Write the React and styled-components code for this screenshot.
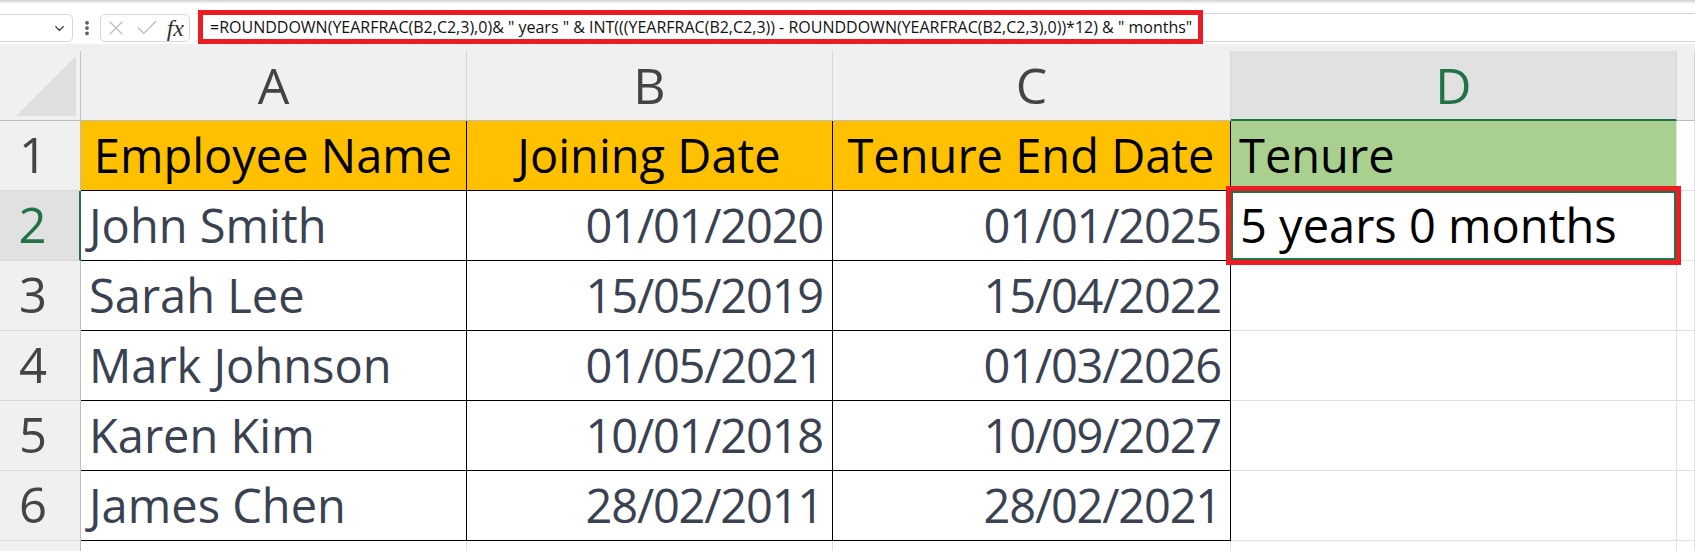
import React from "react";
import styled, { createGlobalStyle } from "styled-components";
import { ChevronDown, EllipsisVertical, X, Check } from "lucide-react";

const GlobalStyle = createGlobalStyle`
  html, body {
    margin: 0;
    padding: 0;
    background: #f0f0f0;
    font-family: "Open Sans", "Noto Sans", sans-serif;
  }
  * { box-sizing: border-box; }
`;

const FORMULA =
  '=ROUNDDOWN(YEARFRAC(B2,C2,3),0)& " years " & INT(((YEARFRAC(B2,C2,3)) - ROUNDDOWN(YEARFRAC(B2,C2,3),0))*12) & " months"';

const columns = [
  { key: "A", width: 386 },
  { key: "B", width: 366 },
  { key: "C", width: 398 },
  { key: "D", width: 446, active: true },
];

const rows = [
  ["John Smith", "01/01/2020", "01/01/2025"],
  ["Sarah Lee", "15/05/2019", "15/04/2022"],
  ["Mark Johnson", "01/05/2021", "01/03/2026"],
  ["Karen Kim", "10/01/2018", "10/09/2027"],
  ["James Chen", "28/02/2011", "28/02/2021"],
];

const App = () => {
  return (
    <>
      <GlobalStyle />
      <Page>
        <FormulaBar>
          <NameBox>
            <ChevronDown size={15} strokeWidth={2.2} color="#333" />
          </NameBox>
          <Dots>
            <EllipsisVertical size={18} strokeWidth={3} color="#555" />
          </Dots>
          <ButtonGroup>
            <X size={24} strokeWidth={1.1} color="#b8b8b8" />
            <Check size={26} strokeWidth={1.1} color="#b8b8b8" />
            <Fx>fx</Fx>
          </ButtonGroup>
          <FormulaInput>
            <Highlight>{FORMULA}</Highlight>
          </FormulaInput>
        </FormulaBar>

        <Sheet>
          <Corner>
            <Triangle />
          </Corner>
          {columns.map((c) => (
            <ColHead key={c.key} $active={c.active}>
              {c.key}
            </ColHead>
          ))}
          <ColHead />

          <RowHead>1</RowHead>
          <Cell $bg="#ffc000" $boxed $head $align="center">Employee Name</Cell>
          <Cell $bg="#ffc000" $boxed $head $align="center">Joining Date</Cell>
          <Cell $bg="#ffc000" $boxed $head $align="center">Tenure End Date</Cell>
          <Cell $bg="#a9d08e" $head>Tenure</Cell>
          <Cell />

          {rows.map((r, i) => (
            <React.Fragment key={r[0]}>
              <RowHead $active={i === 0}>{i + 2}</RowHead>
              <Cell $boxed>{r[0]}</Cell>
              <Cell $boxed $num $align="flex-end">{r[1]}</Cell>
              <Cell $boxed $num $align="flex-end">{r[2]}</Cell>
              {i === 0 ? (
                <Cell $head $selected>5 years 0 months</Cell>
              ) : (
                <Cell />
              )}
              <Cell />
            </React.Fragment>
          ))}

          <RowHead />
          <Cell />
          <Cell />
          <Cell />
          <Cell />
          <Cell />
        </Sheet>
      </Page>
    </>
  );
};

const Page = styled.div`
  width: 100%;
  height: 551px;
  overflow: hidden;
`;

const FormulaBar = styled.div`
  display: flex;
  align-items: flex-start;
  height: 44px;
  padding-top: 14px;
  background: linear-gradient(#d2d2d2 0px, #e8e8e8 2px, #ffffff 4px);
`;

const NameBox = styled.div`
  display: flex;
  align-items: center;
  justify-content: flex-end;
  margin-left: -20px;
  width: 93px;
  height: 28px;
  padding-right: 5px;
  background: #fff;
  border: 1px solid #d6d6d6;
  border-radius: 5px;
`;

const Dots = styled.div`
  display: flex;
  align-items: center;
  justify-content: center;
  width: 27px;
  height: 28px;
`;

const ButtonGroup = styled.div`
  display: flex;
  align-items: center;
  justify-content: space-between;
  width: 90px;
  height: 28px;
  padding: 0 4px 0 3px;
  background: #fff;
  border: 1px solid #d6d6d6;
  border-radius: 5px;
`;

const Fx = styled.span`
  font-family: "Liberation Serif", "DejaVu Serif", serif;
  font-style: italic;
  font-size: 24px;
  line-height: 26px;
  color: #333;
  padding-right: 1px;
`;

const FormulaInput = styled.div`
  flex: 1;
  display: flex;
  align-items: flex-start;
  margin-left: 6px;
  margin-top: -1px;
  height: 29px;
  background: #fff;
  border-top: 1px solid #d4d4d4;
  border-bottom: 1px solid #d4d4d4;
`;

const Highlight = styled.div`
  display: flex;
  align-items: center;
  margin-top: -4px;
  margin-left: 2px;
  height: 34px;
  padding: 0 6px 1px 7px;
  border: 5px solid #ed1c24;
  font-family: "Open Sans", sans-serif;
  font-size: 16px;
  color: #111;
  white-space: nowrap;
`;

const Sheet = styled.div`
  display: grid;
  grid-template-columns: 81px ${columns.map((c) => c.width + "px").join(" ")} 1fr;
  grid-auto-rows: 70px;
  margin-top: 7px;
  background: #fff;
`;

const Corner = styled.div`
  display: flex;
  padding: 5px 4px 4px 16px;
  background: #f0f0f0;
  border-right: 1px solid #c6c6c6;
  border-bottom: 1px solid #bdbdbd;
`;

const Triangle = styled.div`
  flex: 1;
  background: #dfdfdf;
  clip-path: polygon(100% 0, 100% 100%, 0 100%);
`;

const ColHead = styled.div`
  display: flex;
  justify-content: center;
  align-items: flex-end;
  padding-bottom: ${(p) => (p.$active ? 9 : 10)}px;
  background: ${(p) => (p.$active ? "#e1e1e1" : "#f0f0f0")};
  border-right: 1px solid #d6d6d6;
  border-bottom: ${(p) => (p.$active ? "2px solid #217346" : "1px solid #bdbdbd")};
  color: ${(p) => (p.$active ? "#217346" : "#444")};
  font-size: 50px;
  line-height: 50px;
`;

const RowHead = styled.div`
  display: flex;
  justify-content: center;
  align-items: flex-end;
  padding: 0 14px 11px 0;
  background: ${(p) => (p.$active ? "#e1e1e1" : "#f0f0f0")};
  border-right: ${(p) => (p.$active ? "2px solid #217346" : "1px solid #bdbdbd")};
  border-bottom: 1px solid #d9d9d9;
  color: ${(p) => (p.$active ? "#217346" : "#444")};
  font-size: 49px;
  line-height: 49px;
`;

const Cell = styled.div`
  position: relative;
  display: flex;
  align-items: flex-end;
  justify-content: ${(p) => p.$align || "flex-start"};
  padding: 0 9px 11px 8px;
  background: ${(p) => p.$bg || "#fff"};
  border-right: 1px solid ${(p) => (p.$boxed ? "#000" : "#e1e1e1")};
  border-bottom: 1px solid ${(p) => (p.$boxed ? "#000" : "#e1e1e1")};
  color: ${(p) => (p.$head ? "#000" : "#3a4252")};
  font-size: 47px;
  line-height: 47px;
  letter-spacing: ${(p) => (p.$num ? "-1.2px" : "normal")};
  white-space: nowrap;
  ${(p) =>
    p.$selected &&
    `
    z-index: 2;
    padding-left: 9px;
    box-shadow: inset 0 0 0 2px #217346;
    &::after {
      content: "";
      position: absolute;
      top: -5px;
      left: -5px;
      right: -5px;
      bottom: -5px;
      border: 5px solid #ed1c24;
      pointer-events: none;
    }
  `}
`;

export default App;
